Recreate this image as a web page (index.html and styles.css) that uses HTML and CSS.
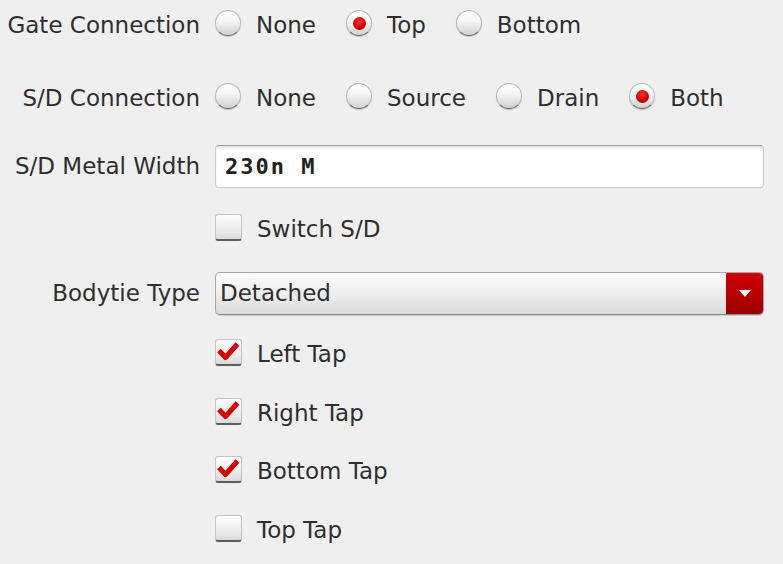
FILE: index.html
```html
<!DOCTYPE html>
<html>
<head>
<meta charset="utf-8">
<link rel="stylesheet" href="styles.css">
</head>
<body>
<div class="form">
  <div class="row r1">
    <div class="label">Gate Connection</div>
    <div class="options">
      <div class="opt"><span class="radio"></span><span>None</span></div>
      <div class="opt"><span class="radio on"></span><span>Top</span></div>
      <div class="opt"><span class="radio"></span><span>Bottom</span></div>
    </div>
  </div>
  <div class="row r2">
    <div class="label">S/D Connection</div>
    <div class="options">
      <div class="opt"><span class="radio"></span><span>None</span></div>
      <div class="opt"><span class="radio"></span><span>Source</span></div>
      <div class="opt"><span class="radio"></span><span>Drain</span></div>
      <div class="opt"><span class="radio on"></span><span>Both</span></div>
    </div>
  </div>
  <div class="row r3">
    <div class="label">S/D Metal Width</div>
    <div class="field">230n M</div>
  </div>
  <div class="row r4">
    <div class="label"></div>
    <div class="opt"><span class="check"></span><span>Switch S/D</span></div>
  </div>
  <div class="row r5">
    <div class="label">Bodytie Type</div>
    <div class="combo">
      <span class="combo-text">Detached</span>
      <span class="combo-btn"><span class="arrow"></span></span>
    </div>
  </div>
  <div class="row r6">
    <div class="label"></div>
    <div class="opt"><span class="check on"><svg viewBox="0 0 26 26" width="26" height="26"><path d="M4 11.5 L10.5 18.5 L22.5 5" fill="none" stroke="#d40000" stroke-width="5" stroke-linejoin="round" stroke-linecap="butt"/></svg></span><span>Left Tap</span></div>
  </div>
  <div class="row r7">
    <div class="label"></div>
    <div class="opt"><span class="check on"><svg viewBox="0 0 26 26" width="26" height="26"><path d="M4 11.5 L10.5 18.5 L22.5 5" fill="none" stroke="#d40000" stroke-width="5" stroke-linejoin="round" stroke-linecap="butt"/></svg></span><span>Right Tap</span></div>
  </div>
  <div class="row r8">
    <div class="label"></div>
    <div class="opt"><span class="check on"><svg viewBox="0 0 26 26" width="26" height="26"><path d="M4 11.5 L10.5 18.5 L22.5 5" fill="none" stroke="#d40000" stroke-width="5" stroke-linejoin="round" stroke-linecap="butt"/></svg></span><span>Bottom Tap</span></div>
  </div>
  <div class="row r9">
    <div class="label"></div>
    <div class="opt"><span class="check"></span><span>Top Tap</span></div>
  </div>
</div>
</body>
</html>
```
FILE: styles.css
```css
html, body {
  margin: 0;
  padding: 0;
  background: #efefef;
}
body {
  width: 783px;
  height: 564px;
  overflow: hidden;
  font-family: "DejaVu Sans", "Liberation Sans", sans-serif;
  font-size: 23px;
  color: #2e2e2e;
}
.form {
  display: flex;
  flex-direction: column;
  padding-top: 2px;
  padding-right: 19px;
}
.row {
  display: flex;
  align-items: center;
  height: 46px;
  gap: 15px;
}
.r1 { margin-top: 0; }
.r2 { margin-top: 27px; }
.r3 { margin-top: 22px; }
.r4 { margin-top: 17px; }
.r5 { margin-top: 18px; }
.r6 { margin-top: 15px; }
.r7 { margin-top: 13px; }
.r8 { margin-top: 12px; }
.r9 { margin-top: 13px; }

.label {
  width: 200px;
  flex: none;
  text-align: right;
  white-space: nowrap;
}
.options {
  display: flex;
  align-items: center;
  gap: 30px;
}
.opt {
  display: flex;
  align-items: center;
  gap: 15px;
  white-space: nowrap;
}
.radio {
  width: 26px;
  height: 26px;
  box-sizing: border-box;
  border-radius: 50%;
  border: 1px solid #b8b8b8;
  border-bottom-color: #6e6e6e;
  background: linear-gradient(#ffffff, #f6f6f6 40%, #d2d2d2);
  box-shadow: 0 1px 1px rgba(0,0,0,0.2);
  display: flex;
  align-items: center;
  justify-content: center;
  margin-bottom: 4px;
  flex: none;
}
.radio.on::after {
  content: "";
  width: 13px;
  height: 13px;
  border-radius: 50%;
  background: radial-gradient(circle at 50% 35%, #ff3030, #d40000 55%, #a00000);
}
.check {
  width: 27px;
  height: 27px;
  box-sizing: border-box;
  border-radius: 3px;
  border: 1px solid #c4c4c4;
  border-bottom: 2px solid #5e5e5e;
  background: linear-gradient(#fdfdfd, #ececec 60%, #dadada);
  flex: none;
  position: relative;
  margin-bottom: 3px;
}
.check svg {
  position: absolute;
  left: -1px;
  top: -1px;
}
.field {
  flex: 1;
  height: 43px;
  box-sizing: border-box;
  background: #ffffff;
  border: 1px solid #cccccc;
  border-top-color: #9c9c9c;
  border-radius: 4px;
  box-shadow: inset 0 2px 2px rgba(0,0,0,0.10);
  display: flex;
  align-items: center;
  padding-left: 9px;
  font-family: "DejaVu Sans Mono", "Liberation Mono", monospace;
  font-weight: bold;
  font-size: 22px;
  letter-spacing: 2px;
  color: #222;
}
.combo {
  flex: 1;
  height: 43px;
  box-sizing: border-box;
  border: 1px solid #a8a8a8;
  border-bottom-color: #888;
  border-radius: 5px;
  background: linear-gradient(#fbfbfb, #eeeeee 50%, #dadada);
  box-shadow: 0 1px 1px rgba(0,0,0,0.15);
  display: flex;
  align-items: center;
  overflow: hidden;
}
.combo-text {
  flex: 1;
  padding-left: 4px;
}
.combo-btn {
  width: 37px;
  align-self: stretch;
  background: linear-gradient(#d00000, #b80000 50%, #980000);
  display: flex;
  align-items: center;
  justify-content: center;
}
.arrow {
  width: 0;
  height: 0;
  border-left: 6px solid transparent;
  border-right: 6px solid transparent;
  border-top: 7px solid #ffffff;
}
```
